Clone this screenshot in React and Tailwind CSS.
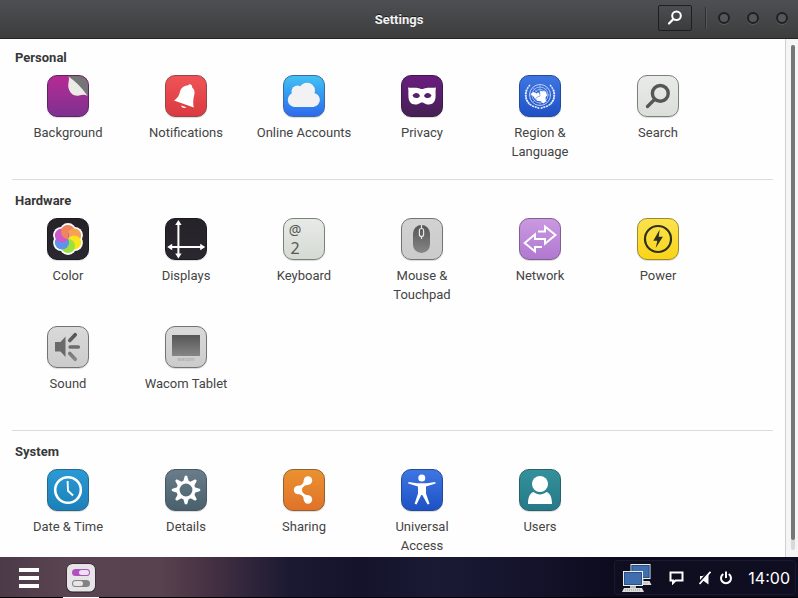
import React from "react";

const GEAR_TEETH = [0, 45, 90, 135, 180, 225, 270, 315];

const PETALS = [
  { angle: 270, color: "#f0845c" },
  { angle: 330, color: "#f5a052" },
  { angle: 30, color: "#fbe61e" },
  { angle: 90, color: "#9be23c" },
  { angle: 150, color: "#5f93ea" },
  { angle: 210, color: "#cb58cc" },
];

function petalX(angle, r) {
  return 21 + r * Math.cos((angle * Math.PI) / 180);
}

function petalY(angle, r) {
  return 21 + r * Math.sin((angle * Math.PI) / 180);
}

const artwork = {
  background: (
    <>
      <path d="M21.500 1H33a8 8 0 0 1 8 8v12Z" fill="#757575" />
      <path d="M21.500 1.500c1.500 3-1 7 0 11.500 1.500 6 6 8.500 10.500 7.500 3.500-.8 5.500-1 8.500.3C35 12.500 28 6 21.500 1.500Z" fill="#eceae7" />
    </>
  ),
  notifications: (
    <g fill="#fff">
      <path d="M9 25.500c4-2.500 5-5 6-9 1-3.500 4-6 7.700-6l2.200-1.500 2 1.400.3 2c2.300 1.800 2.800 4.200 2 7.600-1 4.600-1.400 8.300-.4 12.500Z" />
      <path d="M16 30.500l5.500 1.700c-2 1.500-5 .8-5.500-1.700Z" />
    </g>
  ),
  online: (
    <g fill="#f2f2f4">
      <circle cx="24" cy="15.700" r="8" />
      <circle cx="14.500" cy="16.500" r="6" />
      <circle cx="12" cy="24.800" r="7.200" />
      <circle cx="30" cy="24.800" r="6.900" />
      <path d="M10 15h21v16.900H11Z" />
    </g>
  ),
  privacy: (
    <path
      fill="#fff"
      fillRule="evenodd"
      d="M7 12.500c3 .8 6.500 0 9.500.4 2 .3 3 1 4.500 1s2.500-.7 4.500-1c3-.4 6.500.4 9.500-.4-.7 3-.3 5-.4 8.500-.2 5.500-2.300 8.500-7 8.500-3.600 0-4.600-2-6.600-2s-3 2-6.600 2c-4.700 0-6.800-3-7-8.500-.1-3.500.3-5.500-.4-8.500ZM11.500 20.600c1.300 3.200 5.500 3.400 7.500.3-1-3.600-6-4-7.500-.3ZM23 20.900c2 3.100 6.200 2.900 7.500-.3-1.500-3.700-6.500-3.300-7.500.3Z"
    />
  ),
  region: (
    <g fill="none" stroke="#e4ecff">
      <circle cx="21" cy="20" r="10.500" strokeWidth=".8" />
      <circle cx="21" cy="20" r="8" strokeWidth=".6" />
      <circle cx="21" cy="20" r="5.500" strokeWidth=".6" />
      <path d="M21 10v20M11 20h20M14 13l14 14M28 13l-14 14" strokeWidth=".4" />
      <path d="M11 10c-6 6-6.500 18 4 21.500l6 2M31 10c6 6 6.500 18-4 21.500l-6 2" strokeWidth="1.600" strokeDasharray="2 .7" />
      <path d="M7.500 15c-2 5-.5 10 3.500 14.500M34.500 15c2 5 .5 10-3.500 14.500" strokeWidth="1.600" strokeDasharray="1.600 .9" />
      <path
        d="M11.500 19l3-2 3 1.500 2.500-1 .5 3-2.500 1.500-2 2-1.500-2.500ZM21 16l6 .5 1 4-1.500 2 .5 4-2.500 2-3-2.500-3.500 0-1-2.500 2-1.500 2.500-1Z"
        fill="#fff"
        stroke="none"
      />
    </g>
  ),
  search: (
    <g fill="none" stroke="#555753" strokeLinecap="round">
      <circle cx="23.300" cy="18.400" r="7.900" strokeWidth="3.400" />
      <path d="M17.500 24.500l-7 7" strokeWidth="3.200" />
    </g>
  ),
  color: (
    <>
      {PETALS.map((p) => (
        <circle key={p.angle} cx={petalX(p.angle, 7.6)} cy={petalY(p.angle, 7.6)} r="8.300" fill="#fff" />
      ))}
      {PETALS.map((p) => (
        <circle key={p.angle} cx={petalX(p.angle, 7)} cy={petalY(p.angle, 7)} r="7.100" fill={p.color} />
      ))}
      <path d="M21 6.900a7.100 7.100 0 0 0 0 14.200Z" fill="#f0845c" />
    </>
  ),
  displays: (
    <>
      <path d="M13.400 5v33M5 29h33" stroke="#fff" strokeWidth="2" />
      <path d="M13.400 2l3.200 5h-6.400ZM13.400 40.500l3.200-5h-6.400ZM2.200 29l5-3.200v6.400ZM40.200 29l-5-3.200v6.400Z" fill="#fff" />
    </>
  ),
  keyboard: (
    <g fill="#555753" textAnchor="middle" className="font-['Noto_Sans',sans-serif]">
      <text x="12" y="17" fontSize="14">@</text>
      <text x="12" y="36" fontSize="16">2</text>
    </g>
  ),
  mouse: (
    <>
      <rect x="12" y="7" width="17" height="28" rx="8.500" fill="url(#graphite)" />
      <path d="M20.500 7v4M20.500 18v3" stroke="#e6e6e6" strokeWidth="1.200" />
      <rect x="18.400" y="10.500" width="4.200" height="8" rx="2" fill="none" stroke="#e6e6e6" strokeWidth="1.200" />
    </>
  ),
  network: (
    <path
      d="M19 13.500h7V8.500l10.500 8.500L26 25.700V21H16v-4.700L5.700 25 16 33.500v-4.500h7"
      fill="none"
      stroke="#fff"
      strokeWidth="2"
    />
  ),
  power: (
    <>
      <circle cx="21" cy="21" r="13" fill="none" stroke="#2e3020" strokeWidth="2.200" />
      <path d="M22.700 11.500l-6.400 11.200h4L18.700 30l7.200-11.200h-4.200Z" fill="#2e3020" />
    </>
  ),
  sound: (
    <>
      <path d="M8 16h5.500l5-5.500v20.500l-5-5.500H8Z" fill="#6a6a6a" />
      <path
        d="M22.800 14.500l5.400-5.700M23.200 21h8M22.800 27.500l5.400 5.700"
        stroke="url(#bars)"
        strokeWidth="3.700"
        strokeLinecap="round"
      />
    </>
  ),
  wacom: (
    <>
      <rect x="7" y="9" width="28" height="21" fill="url(#graphite)" />
      <text x="21" y="34.500" fontSize="5" textAnchor="middle" fill="#a2a2a2" className="font-['Noto_Sans',sans-serif]">
        wacom
      </text>
    </>
  ),
  clock: (
    <g fill="none" stroke="#fff">
      <circle cx="21" cy="21" r="12.800" strokeWidth="2.600" />
      <path d="M20.600 12l.4 9.800 5 4.700" strokeWidth="1.900" />
    </g>
  ),
  details: (
    <>
      {GEAR_TEETH.map((a) => (
        <path key={a} d="M18 13l1.900-6.200h2.200L24 13Z" fill="#fff" transform={`rotate(${a} 21 21)`} />
      ))}
      <circle cx="21" cy="21" r="8" fill="none" stroke="#fff" strokeWidth="3.200" />
    </>
  ),
  sharing: (
    <g fill="#fff">
      <circle cx="25" cy="11.500" r="4.200" />
      <circle cx="15" cy="21" r="4.200" />
      <circle cx="25" cy="30.500" r="4.200" />
      <path d="M20.800 11c.2 3.500-2.600 6-6.800 5.900v8.200c4.200-.1 7 2.400 6.800 5.900l4.700-4.700c-4-.3-6.500-2.600-6.500-5.300s2.500-5 6.500-5.300Z" />
    </g>
  ),
  access: (
    <g fill="#fff">
      <circle cx="20.800" cy="9" r="3.500" />
      <path d="M7.500 13l8.500 1.200h10L34.300 13l.3 1.400-9.600 3v7.100l3.500 10.300-1.900.7L21.300 26h-1l-4.800 9.500-1.900-.7 3.400-10.300v-7.100l-9.800-3Z" />
    </g>
  ),
  users: (
    <g fill="#fff">
      <circle cx="21" cy="15" r="8" />
      <path d="M14.500 23c4 3.300 9 3.300 13 0 3.500 1.300 5.500 5 5.500 12H9c0-7 2-10.700 5.500-12Z" />
    </g>
  ),
};

const sections = [
  {
    title: "Personal",
    items: [
      { label: "Background", art: "background", tone: "from-[#b82894] to-[#7c3090] border-[#5c2566]" },
      { label: "Notifications", art: "notifications", tone: "from-[#f05458] to-[#d9383f] border-[#93494a]" },
      { label: "Online Accounts", art: "online", tone: "from-[#45c3f3] to-[#2f66ec] border-[#3e6ba0]" },
      { label: "Privacy", art: "privacy", tone: "from-[#6b1c80] to-[#452053] border-[#3a1c46]" },
      { label: "Region & Language", art: "region", tone: "from-[#3f77e2] to-[#1e50c4] border-[#254a9c]" },
      { label: "Search", art: "search", tone: "from-[#e9ebe9] to-[#dadfd9] border-[#7d807d]" },
    ],
  },
  {
    title: "Hardware",
    items: [
      { label: "Color", art: "color", tone: "from-[#262229] to-[#2b2730] border-[#1c191f]" },
      { label: "Displays", art: "displays", tone: "from-[#262229] to-[#2b2730] border-[#1c191f]" },
      { label: "Keyboard", art: "keyboard", tone: "from-[#e8eae8] to-[#d5dad3] border-[#7d807d]" },
      { label: "Mouse & Touchpad", art: "mouse", tone: "from-[#d2d2d2] to-[#cbcbcb] border-[#737373]" },
      { label: "Network", art: "network", tone: "from-[#cb9ae2] to-[#b077cf] border-[#7f6090]" },
      { label: "Power", art: "power", tone: "from-[#fbe34c] to-[#fad40a] border-[#9a8a34]" },
      { label: "Sound", art: "sound", tone: "from-[#dadada] to-[#cbcbcb] border-[#737373]" },
      { label: "Wacom Tablet", art: "wacom", tone: "from-[#dadada] to-[#cbcbcb] border-[#737373]" },
    ],
  },
  {
    title: "System",
    items: [
      { label: "Date & Time", art: "clock", tone: "from-[#2a9ad6] to-[#1c80b8] border-[#2a6686]" },
      { label: "Details", art: "details", tone: "from-[#6a7d8a] to-[#48606c] border-[#485862]" },
      { label: "Sharing", art: "sharing", tone: "from-[#ea9230] to-[#e0712a] border-[#94602e]" },
      { label: "Universal Access", art: "access", tone: "from-[#3f77e2] to-[#1e50c4] border-[#254a9c]" },
      { label: "Users", art: "users", tone: "from-[#34929c] to-[#267888] border-[#2a626c]" },
    ],
  },
];

function SharedPaints() {
  return (
    <svg className="absolute size-0" aria-hidden="true">
      <defs>
        <linearGradient id="graphite" x1="0" y1="0" x2="0" y2="1">
          <stop offset="0" stopColor="#555" />
          <stop offset="1" stopColor="#868686" />
        </linearGradient>
        <linearGradient id="bars" gradientUnits="userSpaceOnUse" x1="0" y1="8" x2="0" y2="34">
          <stop offset="0" stopColor="#555" />
          <stop offset="1" stopColor="#868686" />
        </linearGradient>
      </defs>
    </svg>
  );
}

function Tile({ item }) {
  return (
    <li className="flex justify-center">
      <button type="button" className="flex w-24 flex-col items-center gap-[6px]">
        <span
          className={`block size-[42px] overflow-hidden rounded-[10px] border bg-linear-to-b bg-origin-border shadow-[0_1px_1px_rgba(0,0,0,0.15)] ${item.tone}`}
        >
          <svg viewBox="1 1 40 40" className="size-full" aria-hidden="true">
            {artwork[item.art]}
          </svg>
        </span>
        <span className="leading-[19px]">{item.label}</span>
      </button>
    </li>
  );
}

function Section({ section, first }) {
  return (
    <section>
      {!first && <hr className="mx-3 border-t border-[#dcdcdc]" />}
      <div className={first ? "pt-[9px] pb-[18px]" : "pt-[11px] pb-[18px]"}>
        <h2 className="mb-2 pl-[15px] leading-[19px] font-bold text-[#383838]">{section.title}</h2>
        <ul className="grid auto-rows-[86px] grid-cols-[repeat(auto-fill,118px)] gap-y-[22px] pl-[9px]">
          {section.items.map((item) => (
            <Tile key={item.label} item={item} />
          ))}
        </ul>
      </div>
    </section>
  );
}

function TitleBar() {
  return (
    <header className="grid h-[39px] shrink-0 grid-cols-[1fr_auto_1fr] items-center border-b border-[#242424] bg-linear-to-b from-[#4d4f53] to-[#3d3d3d]">
      <span />
      <h1 className="pt-[2px] font-bold text-[#f1f1f1] [text-shadow:0_-1px_0_rgba(0,0,0,0.6)]">Settings</h1>
      <div className="flex items-center justify-end pr-[10px] pb-[2px]">
        <button
          type="button"
          aria-label="Search"
          className="mr-[13px] flex h-[26px] w-[34px] items-center justify-center rounded-[2px] border border-[#1f1f20] bg-linear-to-b from-[#4c4d50] to-[#3b3c3d]"
        >
          <svg viewBox="0 0 16 16" className="size-4" fill="none" stroke="#fff" strokeLinecap="round" aria-hidden="true">
            <circle cx="9.500" cy="5.800" r="4.300" strokeWidth="2" />
            <path d="M6.200 9.200l-4.200 4.300" strokeWidth="2.200" />
          </svg>
        </button>
        <span className="mr-[11px] h-[22px] w-[2px] border-l border-[#2f2f30] bg-[#55565a]" />
        <div className="flex gap-[17px]">
          {["Minimize", "Maximize", "Close"].map((name) => (
            <button
              key={name}
              type="button"
              aria-label={name}
              className="size-3 rounded-full border-2 border-[#1f2021] bg-[#55565a] shadow-[0_1px_0_rgba(255,255,255,0.12)]"
            />
          ))}
        </div>
      </div>
    </header>
  );
}

function Computer({ x, y }) {
  return (
    <g transform={`translate(${x} ${y})`}>
      <rect x=".500" y=".500" width="19" height="14" fill="#3f6fae" stroke="#eceeea" />
      <rect x="1.500" y="1.500" width="17" height="12" fill="none" stroke="#2a4f86" />
      <path d="M7 15h6v2H7Z" fill="#b9bbb6" />
      <path d="M1 17h18l2 4H-1Z" fill="#dcdedb" />
      <path d="M2 19h16" stroke="#8f918d" strokeDasharray="1 1" />
    </g>
  );
}

function TaskBar() {
  return (
    <footer className="flex h-[41px] shrink-0 items-stretch border-b border-black bg-[linear-gradient(90deg,#4b3a48_0%,#5a4351_8%,#59424f_20%,#432f42_27%,#1c1a33_36%,#15132b_45%,#1a1a35_55%,#14122a_68%,#0c0a1c_78%,#0e0c20_100%)]">
      <button type="button" aria-label="Menu" className="ml-[19px] flex flex-col justify-center gap-1 pt-[2px]">
        <span className="h-1 w-5 bg-white" />
        <span className="h-1 w-5 bg-white" />
        <span className="h-1 w-5 bg-white" />
      </button>
      <button
        type="button"
        aria-label="Settings window"
        className="-mb-px ml-6 flex w-9 items-center justify-center border-b border-white pt-[2px]"
      >
        <svg viewBox="0 0 30 30" className="size-[30px]" aria-hidden="true">
          <rect x=".500" y=".500" width="29" height="29" rx="6" fill="#231c28" />
          <rect x="1" y="1" width="28" height="27.500" rx="5.500" fill="#e6e4e6" />
          <rect x="6" y="6" width="18" height="7" rx="3.500" fill="#b04fc0" />
          <rect x="13" y="7" width="10" height="5" rx="2.500" fill="#ece2ee" />
          <rect x="6" y="17" width="18" height="7" rx="3.500" fill="#838383" />
          <rect x="7" y="18" width="10" height="5" rx="2.500" fill="#e6e6e6" />
        </svg>
      </button>
      <div className="mt-[3px] mr-[2px] mb-[2px] ml-auto flex items-center rounded border border-[#1b1930] bg-[#0f0d20] pr-[5px] pl-[7px] text-white">
        <button type="button" aria-label="Network" className="mr-[17px]">
          <svg viewBox="0 0 30 28" className="h-7 w-[30px]" aria-hidden="true">
            <Computer x={8.5} y={0} />
            <Computer x={1} y={7} />
          </svg>
        </button>
        <button type="button" aria-label="Messages" className="mr-[15px]">
          <svg viewBox="0 0 15 14" className="h-[14px] w-[15px]" aria-hidden="true">
            <path d="M1.500 1.500h12v8H6.500L4 12V9.500H1.500Z" fill="none" stroke="#fff" strokeWidth="2" />
          </svg>
        </button>
        <button type="button" aria-label="Volume" className="mr-2">
          <svg viewBox="0 0 12 14" className="h-[14px] w-3" aria-hidden="true">
            <path d="M1 5h3l5.500-4v12.500L4 9.500H1Z" fill="#fff" />
            <path d="M-1.500 13.500L10.500-.500" stroke="#0f0d20" strokeWidth="2" />
            <path d="M.500 13L11.500.800" stroke="#fff" strokeWidth="1.800" />
          </svg>
        </button>
        <button type="button" aria-label="Power" className="mr-[15px]">
          <svg viewBox="0 0 14 14" className="size-[14px]" fill="none" stroke="#fff" strokeWidth="2" aria-hidden="true">
            <path d="M4.300 3a5 5 0 1 0 5.400 0M7 .500V7" />
          </svg>
        </button>
        <time className="font-['Inter',sans-serif] text-base">14:00</time>
      </div>
    </footer>
  );
}

export default function App() {
  return (
    <div className="flex h-screen flex-col overflow-hidden bg-white font-['Roboto',sans-serif] text-[13px] text-[#444]">
      <SharedPaints />
      <TitleBar />
      <div className="flex min-h-0 flex-1">
        <main className="min-w-0 flex-1 overflow-hidden bg-[#fefefe]">
          {sections.map((section, i) => (
            <Section key={section.title} section={section} first={i === 0} />
          ))}
        </main>
        <div className="flex w-[13px] flex-col border-l border-[#cfcfcf] bg-[#f5f5f5] pt-[6px] pr-[3px] pb-[7px] pl-[5px]">
          <div className="flex-1 rounded-full bg-[#d8d8d8]">
            <div className="h-[98%] rounded-full bg-[#767676]" />
          </div>
        </div>
      </div>
      <TaskBar />
    </div>
  );
}
